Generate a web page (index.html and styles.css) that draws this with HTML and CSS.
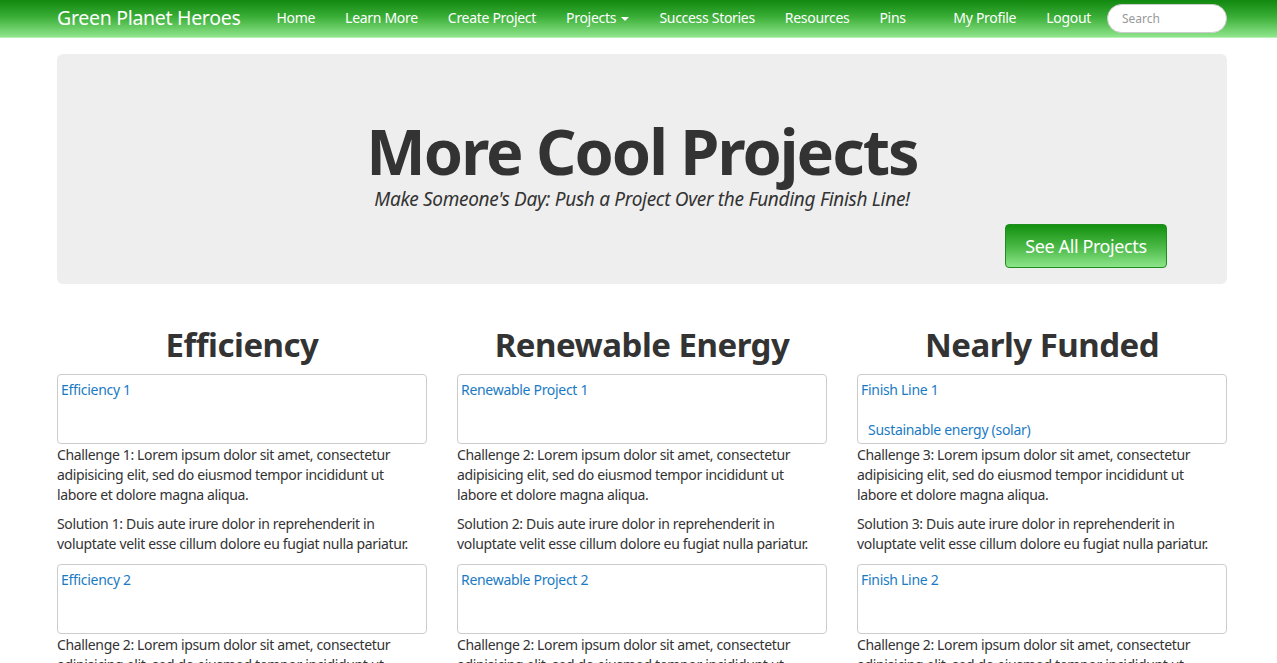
FILE: index.html
```html
<!DOCTYPE html>
<html>
<head>
<meta charset="utf-8">
<link rel="stylesheet" href="styles.css">
</head>
<body>
<div class="navbar">
  <div class="container nav-inner">
    <a class="brand" href="#">Green Planet Heroes</a>
    <ul class="nav">
      <li><a href="#">Home</a></li>
      <li><a href="#">Learn More</a></li>
      <li><a href="#">Create Project</a></li>
      <li><a href="#">Projects <span class="caret"></span></a></li>
      <li><a href="#">Success Stories</a></li>
      <li><a href="#">Resources</a></li>
      <li><a href="#">Pins</a></li>
    </ul>
    <ul class="nav nav-right">
      <li><a href="#">My Profile</a></li>
      <li><a href="#">Logout</a></li>
    </ul>
    <input class="search" type="text" placeholder="Search">
  </div>
</div>

<div class="container">
  <div class="hero">
    <h1>More Cool Projects</h1>
    <p class="tagline">Make Someone's Day: Push a Project Over the Funding Finish Line!</p>
    <div class="hero-actions"><a class="btn-green" href="#">See All Projects</a></div>
  </div>

  <div class="row">
    <div class="col">
      <h2>Efficiency</h2>
      <div class="card"><a href="#">Efficiency 1</a></div>
      <p>Challenge 1: Lorem ipsum dolor sit amet, consectetur adipisicing elit, sed do eiusmod tempor incididunt ut labore et dolore magna aliqua.</p>
      <p>Solution 1: Duis aute irure dolor in reprehenderit in voluptate velit esse cillum dolore eu fugiat nulla pariatur.</p>
      <div class="card"><a href="#">Efficiency 2</a></div>
      <p>Challenge 2: Lorem ipsum dolor sit amet, consectetur adipisicing elit, sed do eiusmod tempor incididunt ut labore et dolore magna aliqua.</p>
    </div>
    <div class="col">
      <h2>Renewable Energy</h2>
      <div class="card"><a href="#">Renewable Project 1</a></div>
      <p>Challenge 2: Lorem ipsum dolor sit amet, consectetur adipisicing elit, sed do eiusmod tempor incididunt ut labore et dolore magna aliqua.</p>
      <p>Solution 2: Duis aute irure dolor in reprehenderit in voluptate velit esse cillum dolore eu fugiat nulla pariatur.</p>
      <div class="card"><a href="#">Renewable Project 2</a></div>
      <p>Challenge 2: Lorem ipsum dolor sit amet, consectetur adipisicing elit, sed do eiusmod tempor incididunt ut labore et dolore magna aliqua.</p>
    </div>
    <div class="col">
      <h2>Nearly Funded</h2>
      <div class="card"><a href="#">Finish Line 1</a><a class="sub" href="#">Sustainable energy (solar)</a></div>
      <p>Challenge 3: Lorem ipsum dolor sit amet, consectetur adipisicing elit, sed do eiusmod tempor incididunt ut labore et dolore magna aliqua.</p>
      <p>Solution 3: Duis aute irure dolor in reprehenderit in voluptate velit esse cillum dolore eu fugiat nulla pariatur.</p>
      <div class="card"><a href="#">Finish Line 2</a></div>
      <p>Challenge 2: Lorem ipsum dolor sit amet, consectetur adipisicing elit, sed do eiusmod tempor incididunt ut labore et dolore magna aliqua.</p>
    </div>
  </div>
</div>
</body>
</html>
```

FILE: styles.css
```css
* { box-sizing: border-box; }
body {
  margin: 0;
  font-family: "Noto Sans", "Open Sans", sans-serif;
  font-size: 14px;
  line-height: 20px;
  color: #333;
  background: #fff;
}
a { text-decoration: none; }
.container { width: 1170px; margin: 0 50px 0 57px; }

.navbar {
  height: 38px;
  background: linear-gradient(to bottom, #11880f 0%, #3aae37 45%, #8fe58c 100%);
  border-bottom: 1px solid #b9f0b6;
}
.nav-inner { display: flex; align-items: center; height: 37px; padding-bottom: 2px; }
.brand {
  color: #fff;
  font-size: 19.5px;
  margin-right: 21px;
  letter-spacing: -0.3px;
}
.nav { list-style: none; margin: 0; padding: 0; display: flex; }
.nav li a {
  display: block;
  color: #fff;
  padding: 0 15px;
  font-size: 14px;
  letter-spacing: -0.3px;
}
.nav-right { margin-left: auto; }
.caret {
  display: inline-block;
  width: 0; height: 0;
  border-left: 4px solid transparent;
  border-right: 4px solid transparent;
  border-top: 4px solid #fff;
  vertical-align: middle;
  margin-left: 2px;
}
.search {
  width: 120px;
  height: 29px;
  border: 1px solid #ccc;
  border-radius: 15px;
  padding: 0 14px;
  font-family: inherit;
  font-size: 12px;
  margin-left: 1px;
  margin-top: 1px;
  outline: none;
}
.search::placeholder { color: #999; }

.hero {
  margin-top: 16px;
  background: #eeeeee;
  border-radius: 6px;
  height: 230px;
  padding: 67px 60px 0;
  text-align: center;
}
.hero h1 {
  margin: 0;
  font-size: 63px;
  line-height: 60px;
  font-weight: bold;
  letter-spacing: -2px;
  color: #333;
}
.tagline {
  margin: 6px 0 0;
  font-size: 19px;
  line-height: 24px;
  font-style: italic;
  letter-spacing: -0.3px;
}
.hero-actions { display: flex; justify-content: flex-end; margin-top: 13px; }
.btn-green {
  display: inline-block;
  width: 162px;
  height: 44px;
  line-height: 42px;
  text-align: center;
  color: #fff;
  font-size: 18px;
  border: 1px solid #1e8c1e;
  border-radius: 4px;
  background: linear-gradient(to bottom, #13900f 0%, #4dbb49 55%, #8de58a 100%);
  letter-spacing: -0.4px;
}

.row { display: grid; grid-template-columns: repeat(3, 370px); column-gap: 30px; margin-top: 40px; }
.col h2 {
  margin: 0 0 8px;
  font-size: 33px;
  line-height: 42px;
  font-weight: bold;
  text-align: center;
  color: #333;
  letter-spacing: -0.5px;
}
.card {
  height: 70px;
  border: 1px solid #ccc;
  border-radius: 4px;
  padding: 5px 3px;
  display: flex;
  flex-direction: column;
  align-items: flex-start;
}
.card a { color: #1a7bc4; font-size: 14px; letter-spacing: -0.3px; }
.card a.sub { margin-top: 20px; margin-left: 7px; }
.col p { margin: 0 0 10px; padding-right: 12px; font-size: 14px; letter-spacing: -0.35px; }
.col .card + p { margin-top: 1px; margin-bottom: 9px; }
```
